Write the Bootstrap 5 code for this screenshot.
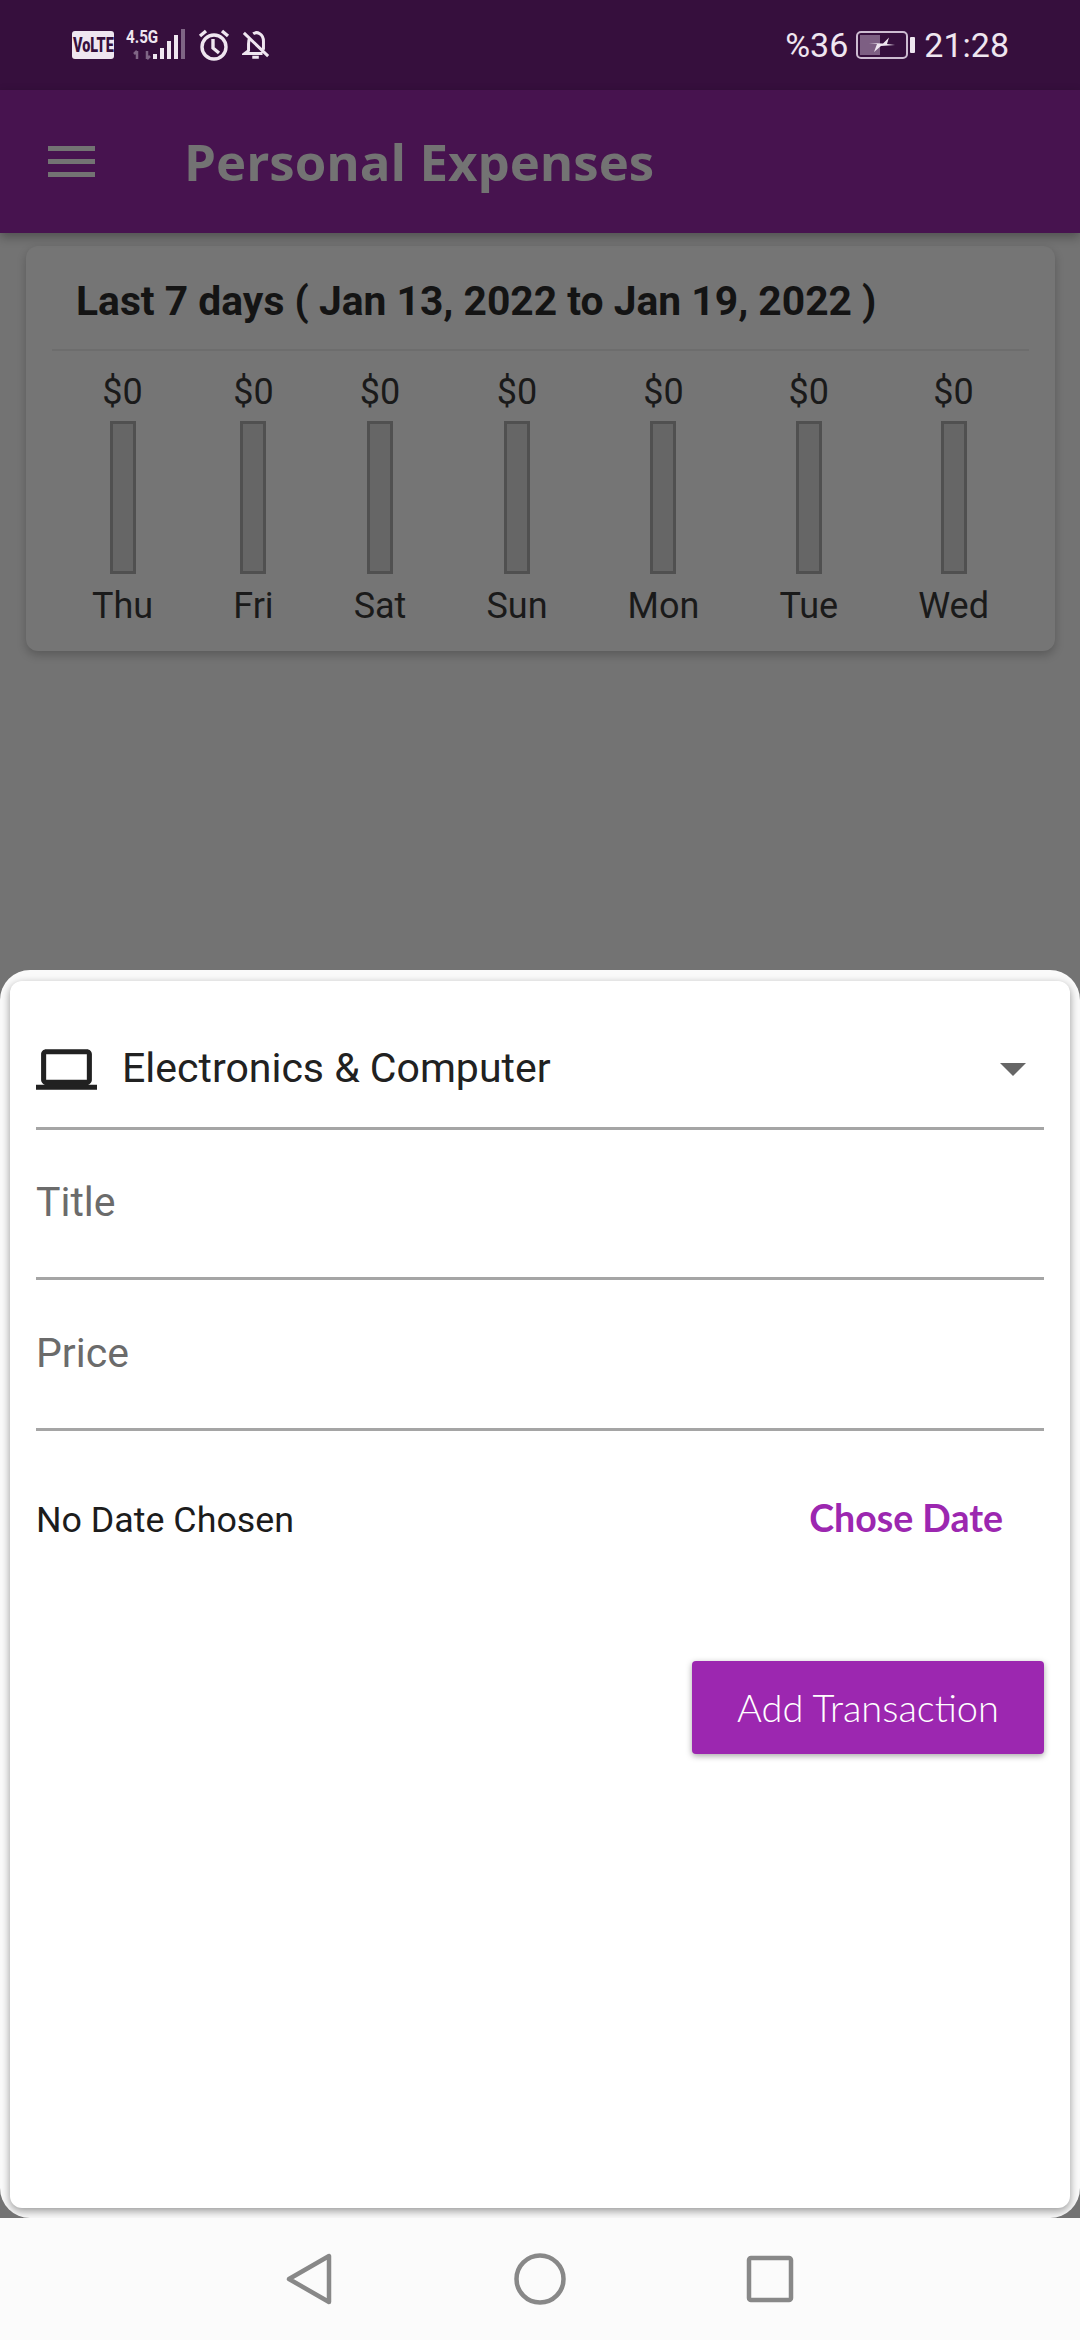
<!DOCTYPE html>
<html lang="en">
<head>
    <meta charset="UTF-8">
    <meta name="viewport" content="width=device-width, initial-scale=1.0">
    <title>Personal Expenses</title>
    <link href="https://cdn.jsdelivr.net/npm/bootstrap@5.3.0/dist/css/bootstrap.min.css" rel="stylesheet">
    <style>
        body { font-family: Roboto, sans-serif; background: #737373; width: 1080px; height: 2340px; overflow: hidden; }
        .phone { height: 2340px; }
        .stat-bar { height: 90px; background: #360f3d; color: #efe6f0; font-size: 34px; padding: 0 71px 0 72px; line-height: 1; }
        .volte { width: 42px; height: 28px; background: #efe6f0; color: #360f3d; border-radius: 3px; font: 900 20px/28px Roboto, sans-serif; text-align: center; }
        .volte span { display: inline-block; transform: scaleX(.72); transform-origin: center; margin: 0 -8px; }
        .net-wrap { width: 60px; height: 32px; margin-left: 12px; }
        .net-label { position: absolute; left: 0; top: 0; font: 700 19px/15px Roboto, sans-serif; transform: scaleX(.8); transform-origin: left; }
        .stat-ico { margin-left: 12px; }
        .app-head { height: 143px; background: #47134f; color: #737373; padding-left: 48px; box-shadow: 0 4px 10px rgba(0,0,0,.3); position: relative; z-index: 2; }
        .head-title { font: 700 51px/58px "Open Sans", sans-serif; margin-left: 89px; padding-bottom: 2px; }
        .main-area { height: 737px; padding: 13px 25px 0 26px; }
        .chart-card { height: 405px; background: #757575; border: 0; border-radius: 12px; box-shadow: 0 4px 10px rgba(0,0,0,.22); padding: 0 26px; }
        .chart-title { font-weight: 700; font-size: 40.8px; line-height: 48px; color: #141414; padding: 31px 0 24px 24px; border-bottom: 2px solid #6d6d6d; }
        .day-col { color: #1a1a1a; font-size: 36px; line-height: 42px; }
        .bar-track { width: 26px; height: 153px; background: #666; border: 3px solid #505050; margin: 8px 0 11px; }
        .chart-days { padding-top: 20px; }
        .sheet-wrap { height: 1248px; background: #fafafa; border-radius: 30px; padding: 11px 10px 10px; overflow: hidden; }
        .sheet-body { height: 100%; background: #fff; border-radius: 12px; padding: 0 26px; box-shadow: 0 3px 8px rgba(0,0,0,.4); }
        .pick-row { height: 149px; padding: 52px 0 22px; border-bottom: 3px solid #a5a5a5; color: #212121; font-size: 41px; }
        .pick-row svg { margin-right: 25px; }
        .pick-caret { width: 0; height: 0; border-left: 13px solid transparent; border-right: 13px solid transparent; border-top: 13px solid #666; margin-right: 18px; }
        .text-field { height: 150px; border-bottom: 3px solid #a5a5a5; padding-top: 47px; color: #6b6b6b; font-size: 41px; line-height: 50px; }
        .text-field + .text-field { height: 151px; padding-top: 48px; }
        .date-row { padding-top: 65px; height: 230px; font-size: 35.8px; line-height: 48px; color: #1c1c1c; }
        .date-btn { font: 700 37.5px/44px Lato, sans-serif; color: #9c27b0; margin-right: 41px; }
        .add-btn { width: 352px; height: 93px; background: #9c27b0; color: #fff; border: 0; border-radius: 4px; font: 300 38px/91px Lato, sans-serif; box-shadow: 0 2px 6px rgba(0,0,0,.35); padding: 0; }
        .nav-strip { height: 122px; background: #fbfbfb; }
        .nav-strip svg { stroke: #888; fill: none; stroke-width: 4.5; }
        .nav-back { left: 285px; top: 35px; }
        .nav-home { left: 514px; top: 35px; }
        .nav-recent { left: 746px; top: 37px; }
    </style>
</head>
<body>
<div class="phone d-flex flex-column">
    <div class="stat-bar d-flex align-items-center justify-content-between flex-shrink-0">
        <div class="d-flex align-items-center">
            <div class="volte"><span>VoLTE</span></div>
            <div class="net-wrap position-relative">
                <span class="net-label">4.5G</span>
                <svg width="60" height="32" viewBox="0 0 60 32" class="position-absolute top-0 start-0">
                    <path d="M11 22v8M11 22l-3 3M21 30v-8M21 30l3-3" stroke="#7f6585" stroke-width="2.5" fill="none"/>
                    <rect x="27" y="25" width="4" height="5" fill="#efe6f0"/>
                    <rect x="34" y="19" width="4" height="11" fill="#efe6f0"/>
                    <rect x="41" y="12" width="4" height="18" fill="#efe6f0"/>
                    <rect x="48" y="6" width="4" height="24" fill="#efe6f0"/>
                    <rect x="55" y="0" width="4" height="30" fill="#7f6585"/>
                </svg>
            </div>
            <svg class="stat-ico" width="32" height="32" viewBox="0 0 32 32" fill="none" stroke="#efe6f0" stroke-width="3.4">
                <circle cx="16" cy="18" r="12"/>
                <path d="M15 10v9l6 5M2 7l6-5M30 7l-6-5"/>
            </svg>
            <svg class="stat-ico" width="28" height="32" viewBox="0 0 30 32" fill="none" stroke="#efe6f0" stroke-width="3.2">
                <path d="M8 9c-1 2-1 4-1 6v7l-4 3h19M12 4c4-3 11 0 11 8v9M11 29h7M2 3l26 25"/>
            </svg>
        </div>
        <div class="d-flex align-items-center">
            <span>%36</span>
            <svg class="mx-2" width="60" height="28" viewBox="0 0 60 28">
                <rect x="1" y="1" width="50" height="26" rx="4" fill="none" stroke="#cdbcd1" stroke-width="2"/>
                <rect x="4" y="4" width="20" height="20" fill="#7d5f83"/>
                <rect x="54" y="6" width="5" height="16" rx="1" fill="#efe6f0"/>
                <path d="M13 12l14 .5 6-6-2 6.5 8 1-14 1-7 6 3-8z" fill="#efe6f0"/>
            </svg>
            <span>21:28</span>
        </div>
    </div>

    <div class="app-head d-flex align-items-center flex-shrink-0">
        <svg width="47" height="31" viewBox="0 0 47 31" fill="#737373">
            <rect width="47" height="5"/><rect y="13" width="47" height="5"/><rect y="26" width="47" height="5"/>
        </svg>
        <div class="head-title">Personal Expenses</div>
    </div>

    <div class="main-area flex-shrink-0">
        <div class="card chart-card">
            <div class="chart-title">Last 7 days ( Jan 13, 2022 to Jan 19, 2022 )</div>
            <div class="chart-days d-flex justify-content-around" id="chartDays"></div>
        </div>
    </div>

    <div class="sheet-wrap flex-shrink-0">
        <div class="sheet-body d-flex flex-column">
            <div class="pick-row d-flex align-items-center">
                <svg width="61" height="61" viewBox="0 0 24 24" fill="#212121"><path d="M20 18c1.1 0 1.99-.9 1.99-2L22 6c0-1.1-.9-2-2-2H4c-1.1 0-2 .9-2 2v10c0 1.1.9 2 2 2H0v2h24v-2h-4zM4 6h16v10H4V6z"/></svg>
                <span class="flex-grow-1">Electronics &amp; Computer</span>
                <span class="pick-caret"></span>
            </div>
            <div class="text-field">Title</div>
            <div class="text-field">Price</div>
            <div class="date-row d-flex justify-content-between">
                <span>No Date Chosen</span>
                <span class="date-btn">Chose Date</span>
            </div>
            <div class="d-flex justify-content-end">
                <button type="button" class="btn add-btn">Add Transaction</button>
            </div>
        </div>
    </div>

    <div class="nav-strip flex-shrink-0 position-relative">
        <svg class="nav-back position-absolute" width="48" height="52" viewBox="0 0 48 52"><path stroke-linejoin="round" d="M44 3v46L4 26z"/></svg>
        <svg class="nav-home position-absolute" width="52" height="52" viewBox="0 0 52 52"><circle cx="26" cy="26" r="23.5"/></svg>
        <svg class="nav-recent position-absolute" width="48" height="48" viewBox="0 0 48 48"><rect x="3" y="3" width="42" height="42" rx="2"/></svg>
    </div>
</div>
<script>
const days = ['Thu', 'Fri', 'Sat', 'Sun', 'Mon', 'Tue', 'Wed'];
let html = '';
for (const d of days) {
    html += `<div class="day-col d-flex flex-column align-items-center">
        <span>$0</span>
        <div class="bar-track"></div>
        <span>${d}</span>
    </div>`;
}
document.getElementById('chartDays').innerHTML = html;
</script>
<script src="https://cdn.jsdelivr.net/npm/bootstrap@5.3.0/dist/js/bootstrap.bundle.min.js"></script>
</body>
</html>
